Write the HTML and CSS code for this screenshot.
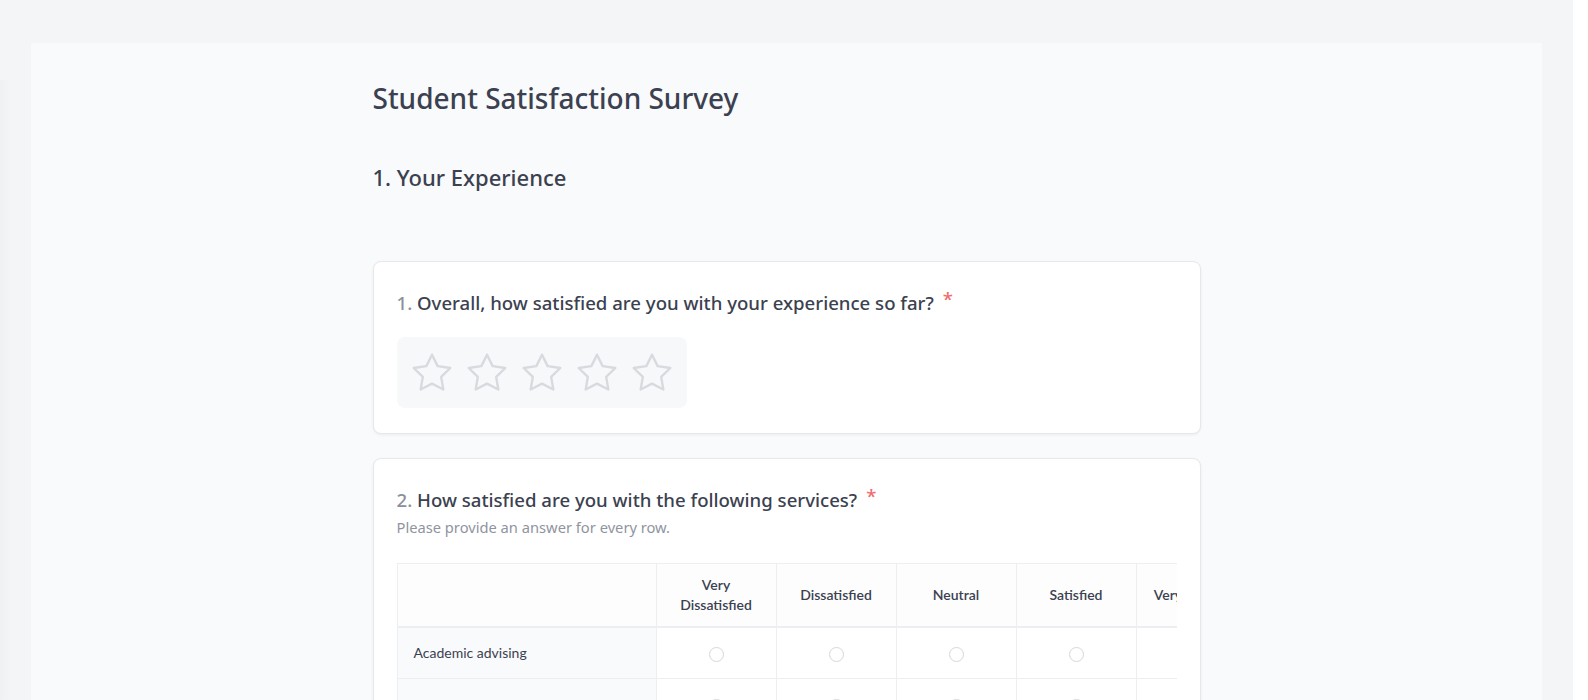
FILE: index.html
```html
<!DOCTYPE html>
<html lang="en">
<head>
<meta charset="utf-8">
<title>Student Satisfaction Survey</title>
<link rel="stylesheet" href="styles.css">
</head>
<body>
<div class="edge-shadow"></div>
<main class="panel">
  <div class="content">
    <h1 class="title">Student Satisfaction Survey</h1>
    <h2 class="section">1. Your Experience</h2>

    <section class="card">
      <div class="q-title"><span class="q-num">1.</span> Overall, how satisfied are you with your experience so far?<span class="req">*</span></div>
      <div class="stars">
        <button class="star" type="button" aria-label="1 star"><svg viewBox="0 0 24 24"><polygon points="12 2 15.09 8.26 22 9.27 17 14.14 18.18 21.02 12 17.77 5.82 21.02 7 14.14 2 9.27 8.91 8.26 12 2"/></svg></button>
        <button class="star" type="button" aria-label="2 stars"><svg viewBox="0 0 24 24"><polygon points="12 2 15.09 8.26 22 9.27 17 14.14 18.18 21.02 12 17.77 5.82 21.02 7 14.14 2 9.27 8.91 8.26 12 2"/></svg></button>
        <button class="star" type="button" aria-label="3 stars"><svg viewBox="0 0 24 24"><polygon points="12 2 15.09 8.26 22 9.27 17 14.14 18.18 21.02 12 17.77 5.82 21.02 7 14.14 2 9.27 8.91 8.26 12 2"/></svg></button>
        <button class="star" type="button" aria-label="4 stars"><svg viewBox="0 0 24 24"><polygon points="12 2 15.09 8.26 22 9.27 17 14.14 18.18 21.02 12 17.77 5.82 21.02 7 14.14 2 9.27 8.91 8.26 12 2"/></svg></button>
        <button class="star" type="button" aria-label="5 stars"><svg viewBox="0 0 24 24"><polygon points="12 2 15.09 8.26 22 9.27 17 14.14 18.18 21.02 12 17.77 5.82 21.02 7 14.14 2 9.27 8.91 8.26 12 2"/></svg></button>
      </div>
    </section>

    <section class="card">
      <div class="q-title"><span class="q-num">2.</span> How satisfied are you with the following services?<span class="req">*</span></div>
      <p class="q-help">Please provide an answer for every row.</p>
      <div class="matrix-wrap">
        <table class="matrix">
          <thead>
            <tr>
              <th class="label-col"></th>
              <th>Very Dissatisfied</th>
              <th>Dissatisfied</th>
              <th>Neutral</th>
              <th>Satisfied</th>
              <th>Very Satisfied</th>
            </tr>
          </thead>
          <tbody>
            <tr>
              <td class="label-col">Academic advising</td>
              <td><span class="radio"></span></td>
              <td><span class="radio"></span></td>
              <td><span class="radio"></span></td>
              <td><span class="radio"></span></td>
              <td><span class="radio"></span></td>
            </tr>
            <tr>
              <td class="label-col">Library services</td>
              <td><span class="radio"></span></td>
              <td><span class="radio"></span></td>
              <td><span class="radio"></span></td>
              <td><span class="radio"></span></td>
              <td><span class="radio"></span></td>
            </tr>
            <tr>
              <td class="label-col">Career services</td>
              <td><span class="radio"></span></td>
              <td><span class="radio"></span></td>
              <td><span class="radio"></span></td>
              <td><span class="radio"></span></td>
              <td><span class="radio"></span></td>
            </tr>
            <tr>
              <td class="label-col">IT support</td>
              <td><span class="radio"></span></td>
              <td><span class="radio"></span></td>
              <td><span class="radio"></span></td>
              <td><span class="radio"></span></td>
              <td><span class="radio"></span></td>
            </tr>
          </tbody>
        </table>
      </div>
    </section>
  </div>
</main>
</body>
</html>
```

FILE: styles.css
```css
* { box-sizing: border-box; }

html {
  margin: 0;
  padding: 0;
  background: #ffffff;
}

body {
  margin: 0 15px 0 0;
  padding: 0;
  background: #f4f5f7;
  font-family: "Noto Sans", "Open Sans", sans-serif;
  color: #374151;
  min-height: 100vh;
}

.edge-shadow {
  position: fixed;
  left: 0;
  top: 80px;
  bottom: 0;
  width: 10px;
  background: linear-gradient(to right, #eef0f2, rgba(244,245,247,0));
}

.panel {
  margin: 43px 31px 0 31px;
  background: #f9fafb;
  padding: 38px 0 60px;
}

.content {
  width: 828px;
  margin: 0 auto;
}

.title {
  margin: 0;
  font-size: 28px;
  line-height: 34px;
  font-weight: 500;
  color: #3b4150;
}

.section {
  margin: 48px 0 0;
  font-size: 22px;
  line-height: 28px;
  font-weight: 500;
  color: #3b4150;
}

.card {
  margin-top: 70px;
  background: #fff;
  border: 1px solid #e6e8eb;
  border-radius: 8px;
  box-shadow: 0 1px 3px rgba(17, 24, 39, 0.06);
  padding: 27px 23px 25px;
}

.card + .card {
  margin-top: 24px;
}

.q-title {
  font-size: 18.6px;
  line-height: 28px;
  font-weight: 500;
  color: #3b4150;
}

.q-num {
  color: #8b909c;
}

.req {
  color: #f06c6c;
  margin-left: 9px;
  position: relative;
  top: -4px;
}

.stars {
  margin-top: 20px;
  display: inline-flex;
  gap: 11px;
  padding: 14px 13px 13px;
  background: #f7f8fa;
  border-radius: 8px;
}

.star {
  width: 44px;
  height: 44px;
  padding: 0;
  border: 0;
  background: none;
  display: block;
}

.star svg {
  width: 44px;
  height: 44px;
  display: block;
  fill: none;
  stroke: #d7dade;
  stroke-width: 1.3;
  stroke-linejoin: round;
}

.q-help {
  margin: 2px 0 0;
  font-size: 14.7px;
  line-height: 22px;
  color: #8f949f;
}

.matrix-wrap {
  margin-top: 25px;
  overflow: hidden;
}

.matrix {
  border-collapse: collapse;
  font-family: Lato, "Noto Sans", sans-serif;
  table-layout: fixed;
  width: 860px;
}

.matrix th,
.matrix td {
  border: 1px solid #eceef1;
  text-align: center;
  padding: 0 8px;
}

.matrix th {
  width: 120px;
  height: 63px;
  font-size: 14px;
  line-height: 20px;
  font-weight: 600;
  color: #3b4150;
  background: #fdfdfe;
  border-bottom: 2px solid #eceef1;
}

.matrix th.label-col {
  width: 259px;
}

.matrix td {
  height: 52px;
  background: #fff;
}

.matrix td.label-col {
  text-align: left;
  padding-left: 16px;
  font-size: 14px;
  color: #3b4150;
  background: #f9fafb;
}

.radio {
  display: inline-block;
  width: 15px;
  height: 15px;
  border: 1px solid #d4d7dc;
  border-radius: 50%;
  background: #fff;
  vertical-align: middle;
}
```
